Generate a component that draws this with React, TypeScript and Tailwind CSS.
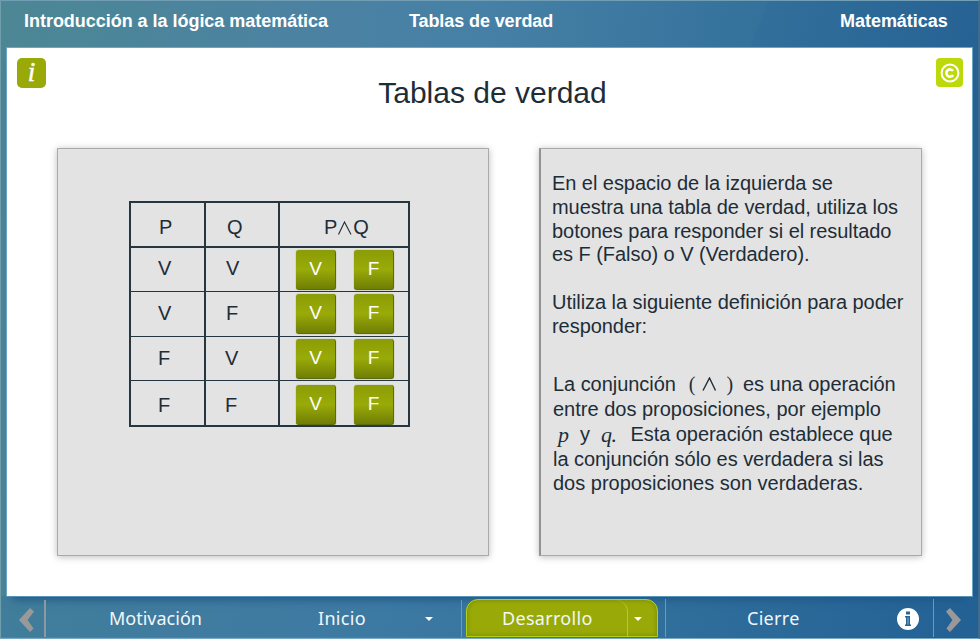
import type { ReactNode } from "react";

const rows = [
  { p: "V", q: "V", h: "h-[44px] leading-[41px]", pad: "pt-[2px]", qx: "pl-[20px]" },
  { p: "V", q: "F", h: "h-[45px] leading-[43px]", pad: "pt-[2px]", qx: "pl-[20px]" },
  { p: "F", q: "V", h: "h-[44px] leading-[43px]", pad: "pt-[2px]", qx: "pl-[19px]" },
  { p: "F", q: "F", h: "h-[46px] leading-[48px]", pad: "pt-[4px]", qx: "pl-[19px]" },
];

function AnswerButton({ label }: { label: string }) {
  return (
    <button className="flex h-[40px] w-[40px] justify-center rounded-[3px] border-r border-b border-[#5d6a10] bg-linear-to-b from-[#8b9c06] via-[#99ab08] via-50% to-[#707e04] pt-[8px] text-[19px] leading-[22px] text-white shadow-[0_0_1px_#6a7708]">
      {label}
    </button>
  );
}

function Line({ children, className = "" }: { children: ReactNode; className?: string }) {
  return <div className={"whitespace-pre " + className}>{children}</div>;
}

function TruthTable() {
  return (
    <div className="mt-[52px] ml-[71px] w-[281px] border-t-2 border-l-2 border-[#263641] text-[20px] text-[#1d2d38]">
      <div className="flex h-[45px] border-b-2 border-[#263641] leading-[49px]">
        <div className="w-[75px] border-r-2 border-[#263641] pl-[28px]">P</div>
        <div className="w-[74px] border-r-2 border-[#263641] pl-[21px]">Q</div>
        <div className="flex w-[130px] border-r-2 border-[#263641] pl-[44px]">
          <span>P</span>
          <svg className="mt-[18px] h-[14px] w-[16px]" viewBox="0 0 15 14" fill="none" stroke="#1d2d38">
            <path d="M1 13.5L7 1L13.5 13.5" strokeWidth="1.1" />
          </svg>
          <span>Q</span>
        </div>
      </div>
      {rows.map((r, i) => (
        <div key={i} className={"flex border-b border-[#263641] last:border-b-2 " + r.h}>
          <div className="w-[75px] border-r-2 border-[#263641] pl-[27px]">{r.p}</div>
          <div className={"w-[74px] border-r-2 border-[#263641] " + r.qx}>{r.q}</div>
          <div className={"flex w-[130px] gap-[18px] border-r-2 border-[#263641] pl-[16px] " + r.pad}>
            <AnswerButton label="V" />
            <AnswerButton label="F" />
          </div>
        </div>
      ))}
    </div>
  );
}

function Instructions() {
  return (
    <div className="pt-[22px] pl-[11px] text-[20px] leading-[24px] tracking-[-0.05px] text-[#1d2d38]">
      <Line>En el espacio de la izquierda se</Line>
      <Line>muestra una tabla de verdad, utiliza los</Line>
      <Line>botones para responder si el resultado</Line>
      <Line className="-mt-px">es F (Falso) o V (Verdadero).</Line>
      <Line className="mt-[24px]">Utiliza la siguiente definición para poder</Line>
      <Line>responder:</Line>
      <div className="mt-[34px] pl-px leading-[25px]">
        <div className="flex">
          <Line>La conjunción</Line>
          <span className="ml-[13px] font-['Liberation_Serif',serif]">(</span>
          <svg className="mr-[9px] ml-[7px] mt-[5px] h-[14px] w-[15px]" viewBox="0 0 15 14" fill="none" stroke="#1d2d38">
            <path d="M1 13.5L7.5 1L13.5 13.5" strokeWidth="1.4" />
          </svg>
          <span className="font-['Liberation_Serif',serif]">)</span>
          <Line className="ml-[10px]">es una operación</Line>
        </div>
        <Line className="tracking-[0px]">entre dos proposiciones, por ejemplo</Line>
        <div className="flex">
          <span className="ml-[5px] font-['Liberation_Serif',serif] text-[22px] italic">p</span>
          <span className="ml-[11px]">y</span>
          <span className="ml-[11px] font-['Liberation_Serif',serif] text-[22px] tracking-[-0.5px] italic">q.</span>
          <Line className="ml-[14px]">Esta operación establece que</Line>
        </div>
        <Line>la conjunción sólo es verdadera si las</Line>
        <Line className="-mt-px tracking-[0px]">dos proposiciones son verdaderas.</Line>
      </div>
    </div>
  );
}

function Caret({ className }: { className: string }) {
  return (
    <svg className={"h-[4px] w-[8px] " + className} viewBox="0 0 8 4">
      <path d="M0 0H8L4 4Z" fill="#fff" />
    </svg>
  );
}

function Chevron({ flip = false }: { flip?: boolean }) {
  return (
    <svg className={"h-[26px] w-[16px] " + (flip ? "-scale-x-100" : "")} viewBox="0 0 16 26">
      <path d="M12 1L16 4.5L9.5 13L15.5 21.5L12 25L1 13Z" fill="#999" />
    </svg>
  );
}

export default function App() {
  return (
    <div className="flex h-[639px] w-[980px] flex-col border-t border-r-2 border-b border-l border-t-[#719eb4] border-r-[#416a8b] border-b-[#78a9c5] border-l-[#719eac] bg-[linear-gradient(100deg,#4c8794_0%,#4b82a3_30%,#4680a6_45%,#34719b_70%,#2b6797_84%,#205c91_100%)] font-['Liberation_Sans',Arial,sans-serif]">
      <header className="flex h-[47px] shrink-0 bg-[linear-gradient(112deg,transparent_0_77%,#22639320_77.1%)] pt-[8px] text-[18px] leading-[24px] font-bold tracking-[-0.03px] text-white">
        <span className="ml-[23px] w-[385px] whitespace-nowrap">Introducción a la lógica matemática</span>
        <span className="w-[431px] tracking-[-0.1px]">Tablas de verdad</span>
        <span>Matemáticas</span>
      </header>

      <main className="mr-[6px] ml-[6px] h-[548px] shrink-0 bg-white shadow-[0_0_0_1px_#6ca5c5,0_8px_9px_-5px_#164a7c]">
        <div className="flex justify-between pt-[10px] pr-[9px] pl-[10px]">
          <div className="flex h-[30px] w-[29px] items-center justify-center rounded-[5px] bg-[#99aa08] pb-px font-['Liberation_Serif',serif] text-[27px] leading-none text-white italic [-webkit-text-stroke:0.5px_#fff]">i</div>
          <h1 className="mt-[16px] ml-[3px] text-[30px] leading-[37px] text-[#1d2d38]">Tablas de verdad</h1>
          <div className="flex h-[29px] w-[27px] items-center justify-center rounded-[4px] bg-[#bdd80b]">
            <svg className="h-[20px] w-[20px]" viewBox="0 0 20 20" fill="none" stroke="#fff">
              <circle cx="10" cy="10" r="8.4" strokeWidth="2" />
              <path d="M13 8A3.6 3.6 0 1 0 13 12" strokeWidth="2.6" />
            </svg>
          </div>
        </div>
        <div className="mt-[37px] flex gap-[50px] pl-[50px]">
          <section className="h-[408px] w-[432px] border border-[#aaa] bg-[#e3e3e3] shadow-[0_1px_7px_#0004]">
            <TruthTable />
          </section>
          <section className="h-[408px] w-[383px] border border-l-2 border-[#aaa] border-l-[#929292] bg-[#e3e3e3] shadow-[0_1px_7px_#0004]">
            <Instructions />
          </section>
        </div>
      </main>

      <nav className="flex h-[41px] items-stretch bg-[#2a6c9c50] font-['Noto_Sans',sans-serif] text-[18px] leading-[34px] text-[#f1f7fa]">
        <div className="mt-[4px] flex w-[45px] justify-between border-r-2 border-[#8e999f] pt-[7px] pl-[17px]">
          <Chevron />
        </div>
        <div className="w-[209px] pt-[5px] pl-[63px]">Motivación</div>
        <div className="mt-[4px] flex w-[207px] border-r border-[#6a9abb] pt-px pl-[63px]">
          <span className="w-[107px] tracking-[0.3px]">Inicio</span>
          <Caret className="mt-[16px]" />
        </div>
        <div className="mt-[3px] ml-[4px] flex w-[192px] rounded-t-[12px] border border-[#b4d016] bg-[#99aa08] shadow-[inset_0_0_5px_#74850a]">
          <div className="w-[161px] rounded-tr-[12px] border-r border-[#b4d016] pt-px pl-[35px] tracking-[0.3px]">Desarrollo</div>
          <Caret className="mt-[17px] ml-[6px]" />
        </div>
        <div className="mt-[3px] ml-[7px] flex w-[269px] border-r border-l border-[#6a9abb] pt-[2px] pl-[81px]">
          <span className="w-[150px] tracking-[0.3px]">Cierre</span>
          <svg className="mt-[7px] h-[22px] w-[22px]" viewBox="0 0 22 22">
            <circle cx="11" cy="11" r="11" fill="#fff" />
            <path d="M9 3.5H13V6.5H9ZM8 8H13V16.5H14V18H8V16.5H9V9.5H8Z" fill="#286494" />
            <path d="M11 9.5V16.5" stroke="#8fb2cc" strokeWidth="1" />
          </svg>
        </div>
        <div className="pt-[11px] pl-[12px]"><Chevron flip /></div>
      </nav>
    </div>
  );
}
